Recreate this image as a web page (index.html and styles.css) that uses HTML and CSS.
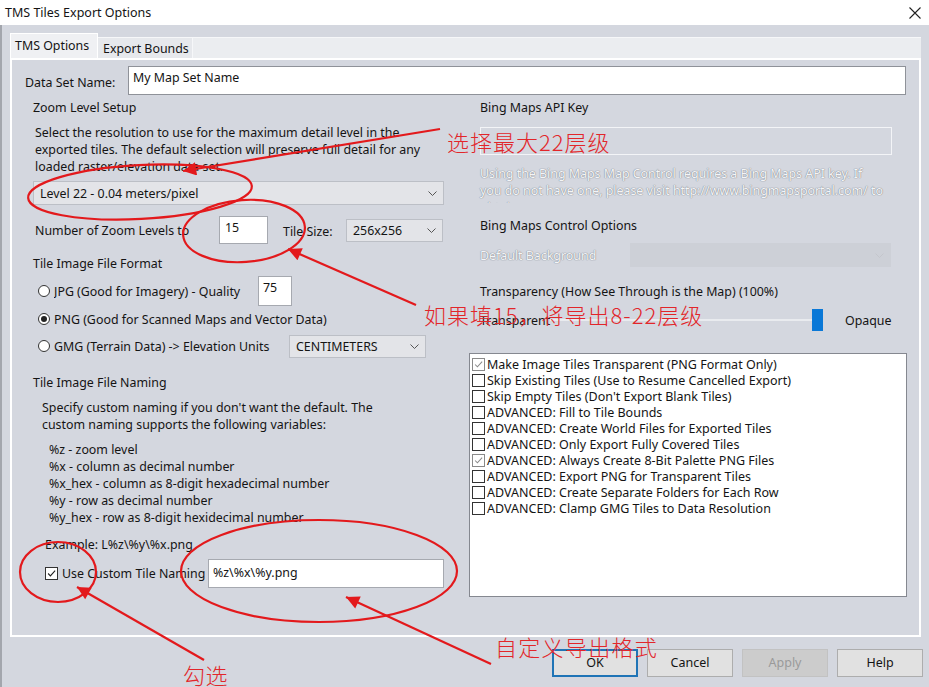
FILE: index.html
```html
<!DOCTYPE html>
<html>
<head>
<meta charset="utf-8">
<title>TMS Tiles Export Options</title>
<link rel="stylesheet" href="styles.css">
</head>
<body>
<div class="titlebar">
  <span class="title">TMS Tiles Export Options</span>
  <svg class="close" viewBox="0 0 12 12"><path d="M0.5 0.5 L11.5 11.5 M11.5 0.5 L0.5 11.5" stroke="#222" stroke-width="1.1" fill="none"/></svg>
</div>
<div class="frame">
  <div class="tabs">
    <div class="tab active">TMS Options</div>
    <div class="tab second">Export Bounds</div>
    <div class="tab-fill"></div>
  </div>
  <div class="panel">
    <div class="name-row">
      <span class="name-label">Data Set Name:</span>
      <div class="input name-input">My Map Set Name</div>
    </div>
    <div class="columns">
      <div class="col-left">
        <div class="legend">Zoom Level Setup</div>
        <div class="para">Select the resolution to use for the maximum detail level in the<br>exported tiles. The default selection will preserve full detail for any<br>loaded raster/elevation data set.</div>
        <div class="select sel-level"><span>Level 22 - 0.04 meters/pixel</span><svg class="chev" viewBox="0 0 9 5"><path d="M0.5 0.5 L4.5 4.5 L8.5 0.5" fill="none" stroke="#555"/></svg></div>
        <div class="zoom-row">
          <span class="zoom-label">Number of Zoom Levels to</span>
          <div class="input zoom-input">15</div>
          <span class="tile-label">Tile Size:</span>
          <div class="select sel-tile"><span>256x256</span><svg class="chev" viewBox="0 0 9 5"><path d="M0.5 0.5 L4.5 4.5 L8.5 0.5" fill="none" stroke="#555"/></svg></div>
        </div>
        <div class="legend lg-fmt">Tile Image File Format</div>
        <div class="radio-row row-jpg">
          <span class="radio"></span><span class="radio-label jpg">JPG (Good for Imagery) - Quality</span>
          <div class="input q-input">75</div>
        </div>
        <div class="radio-row row-png">
          <span class="radio"><span class="dot"></span></span><span class="radio-label">PNG (Good for Scanned Maps and Vector Data)</span>
        </div>
        <div class="radio-row row-gmg">
          <span class="radio"></span><span class="radio-label gmg">GMG (Terrain Data) -&gt; Elevation Units</span>
          <div class="select sel-unit"><span>CENTIMETERS</span><svg class="chev" viewBox="0 0 9 5"><path d="M0.5 0.5 L4.5 4.5 L8.5 0.5" fill="none" stroke="#555"/></svg></div>
        </div>
        <div class="legend lg-naming">Tile Image File Naming</div>
        <div class="spec">Specify custom naming if you don't want the default. The<br>custom naming supports the following variables:</div>
        <div class="vars">%z - zoom level<br>%x - column as decimal number<br>%x_hex - column as 8-digit hexadecimal number<br>%y - row as decimal number<br>%y_hex - row as 8-digit hexidecimal number</div>
        <div class="example">Example: L%z\%y\%x.png</div>
        <div class="custom-row">
          <span class="check"><svg viewBox="0 0 13 13"><path d="M2.5 6.5 L5.2 9.3 L10.8 3" fill="none" stroke="#222" stroke-width="1.3"/></svg></span>
          <span class="custom-label">Use Custom Tile Naming</span>
          <div class="input custom-input">%z\%x\%y.png</div>
        </div>
      </div>
      <div class="col-right">
        <div class="legend lg-right">Bing Maps API Key</div>
        <div class="api-input"></div>
        <div class="api-note">Using the Bing Maps Map Control requires a Bing Maps API key. If<br>you do not have one, please visit http://www.bingmapsportal.com/ to<br>obtain one.</div>
        <div class="legend lg-right lg-ctrl">Bing Maps Control Options</div>
        <div class="bg-row">
          <span class="bg-label">Default Background</span>
          <div class="select sel-bg"><span></span><svg class="chev" viewBox="0 0 9 5"><path d="M0.5 0.5 L4.5 4.5 L8.5 0.5" fill="none" stroke="#c4c6cc"/></svg></div>
        </div>
        <div class="legend lg-right lg-trans">Transparency (How See Through is the Map) (100%)</div>
        <div class="slider-row">
          <span class="s-label">Transparent</span>
          <div class="track"><span class="thumb"></span></div>
          <span class="s-right">Opaque</span>
        </div>
        <div class="checklist">
          <div class="item"><span class="check gray"><svg viewBox="0 0 13 13"><path d="M2.5 6.5 L5.2 9.3 L10.8 3" fill="none" stroke="#8a8a8a" stroke-width="1.2"/></svg></span>Make Image Tiles Transparent (PNG Format Only)</div>
          <div class="item"><span class="check"></span>Skip Existing Tiles (Use to Resume Cancelled Export)</div>
          <div class="item"><span class="check"></span>Skip Empty Tiles (Don't Export Blank Tiles)</div>
          <div class="item"><span class="check"></span>ADVANCED: Fill to Tile Bounds</div>
          <div class="item"><span class="check"></span>ADVANCED: Create World Files for Exported Tiles</div>
          <div class="item"><span class="check"></span>ADVANCED: Only Export Fully Covered Tiles</div>
          <div class="item"><span class="check gray"><svg viewBox="0 0 13 13"><path d="M2.5 6.5 L5.2 9.3 L10.8 3" fill="none" stroke="#8a8a8a" stroke-width="1.2"/></svg></span>ADVANCED: Always Create 8-Bit Palette PNG Files</div>
          <div class="item"><span class="check"></span>ADVANCED: Export PNG for Transparent Tiles</div>
          <div class="item"><span class="check"></span>ADVANCED: Create Separate Folders for Each Row</div>
          <div class="item"><span class="check"></span>ADVANCED: Clamp GMG Tiles to Data Resolution</div>
        </div>
      </div>
    </div>
  </div>
  <div class="buttons">
    <div class="btn ok">OK</div>
    <div class="btn">Cancel</div>
    <div class="btn disabled">Apply</div>
    <div class="btn">Help</div>
  </div>
</div>

<svg class="marks" viewBox="0 0 929 687">
  <defs>
    <marker id="ah" viewBox="0 0 10 10" refX="10" refY="5" markerWidth="7" markerHeight="6" orient="auto">
      <path d="M0 0 L10 5 L0 10 z" fill="#e3191c"/>
    </marker>
  </defs>
  <g fill="none" stroke="#e3191c" stroke-width="2.2">
    <ellipse cx="140" cy="192" rx="112" ry="27" transform="rotate(-3 140 192)"/>
    <ellipse cx="244" cy="231" rx="61" ry="31" transform="rotate(-4 244 231)"/>
    <ellipse cx="58" cy="572" rx="38" ry="30"/>
    <ellipse cx="319" cy="571" rx="138" ry="51"/>
    <line x1="440" y1="129" x2="183" y2="171" marker-end="url(#ah)"/>
    <line x1="416" y1="305" x2="288" y2="249" marker-end="url(#ah)"/>
    <line x1="204" y1="660" x2="77" y2="587" marker-end="url(#ah)"/>
    <line x1="491" y1="664" x2="346" y2="597" marker-end="url(#ah)"/>
  </g>
</svg>
<div class="note n1">选择最大22层级</div>
<div class="note n2">如果填15，将导出8-22层级</div>
<div class="note n3">自定义导出格式</div>
<div class="note n4">勾选</div>
</body>
</html>
```
FILE: styles.css
```css
* { box-sizing: border-box; }
html, body { margin: 0; padding: 0; }
body {
  width: 929px;
  height: 687px;
  overflow: hidden;
  position: relative;
  background: #d4d7df;
  font-family: "Noto Sans", "DejaVu Sans", sans-serif;
  font-size: 12.4px;
  color: #141414;
}
.titlebar {
  height: 25px;
  background: #fff;
  display: flex;
  align-items: center;
  justify-content: space-between;
  padding: 0 8px 0 5px;
}
.title { font-size: 12.5px; }
.close { width: 12px; height: 12px; }
.frame {
  border-left: 2px solid #a3a6ad;
  height: 662px;
  padding: 8px 0 0 8px;
}
.tabs { display: flex; align-items: flex-end; height: 25px; width: 911px; }
.tab {
  height: 21px;
  line-height: 21px;
  padding-left: 5px;
  background: #e6e8ec;
  border-top: 1px solid #f6f7f9;
  border-right: 1px solid #f6f7f9;
  white-space: nowrap;
}
.tab.active {
  width: 88px;
  height: 25px;
  line-height: 24px;
  background: #eff0f3;
  border: 1px solid #fff;
  border-bottom: none;
  padding-left: 4px;
}
.tab.second { width: 95px; }
.tab-fill { flex: 1; height: 21px; background: #ebedf0; border-top: 1px solid #f6f7f9; }
.panel {
  width: 911px;
  height: 579px;
  border: 2px solid #fff;
  padding-top: 6px;
}
.name-row { display: flex; align-items: center; height: 29px; }
.name-label { width: 116px; padding-left: 13px; padding-top: 3px; }
.input {
  background: #fff;
  border: 1px solid #a6a9b0;
  padding-left: 4px;
}
.name-input { width: 778px; height: 29px; line-height: 22px; border-color: #8f9299; }
.columns {
  display: grid;
  grid-template-columns: 430px 438px;
  column-gap: 13px;
  margin: 3px 0 0 14px;
}
.col-left, .col-right { display: flex; flex-direction: column; }
.legend { height: 20px; line-height: 20px; padding-left: 7px; white-space: nowrap; }
.para { margin-top: 5.5px; line-height: 17px; padding-left: 9px; white-space: nowrap; }
.select {
  display: flex;
  align-items: center;
  justify-content: space-between;
  background: #e3e4e8;
  border: 1px solid #bcbfc6;
  padding: 0 6px 0 6px;
}
.chev { width: 9px; height: 5px; }
.sel-level { margin: 6.5px 0 0 7px; width: 411px; height: 24px; }
.zoom-row { margin-top: 11px; height: 28px; display: flex; align-items: center; padding-left: 9px; }
.zoom-label { width: 184px; white-space: nowrap; }
.zoom-input { width: 49px; height: 28px; line-height: 22px; padding-left: 5px; }
.tile-label { width: 63px; margin-left: 15px; padding-top: 2px; }
.sel-tile { width: 97px; height: 23px; }
.lg-fmt { margin-top: 10px; }
.radio-row { display: flex; align-items: center; padding-left: 12px; }
.row-jpg { height: 28px; margin-top: 3px; }
.row-png { height: 28px; }
.row-gmg { height: 26px; }
.radio {
  width: 12px;
  height: 12px;
  border: 1px solid #333;
  border-radius: 50%;
  background: #fff;
  display: flex;
  align-items: center;
  justify-content: center;
  flex: none;
}
.dot { width: 6px; height: 6px; border-radius: 50%; background: #222; }
.radio-label { margin-left: 4px; white-space: nowrap; overflow: hidden; }
.jpg { width: 204px; }
.gmg { width: 217px; }
.q-input { width: 34px; height: 30px; line-height: 22px; }
.sel-unit { width: 137px; height: 23px; margin-left: 18px; }
.lg-naming { margin-top: 14px; }
.spec { margin-top: 5.5px; line-height: 17px; padding-left: 16px; white-space: nowrap; }
.vars { margin-top: 8px; line-height: 17px; padding-left: 23px; white-space: nowrap; }
.example { margin-top: 10px; line-height: 17px; padding-left: 19px; }
.custom-row { margin-top: 6.5px; height: 29px; display: flex; align-items: center; padding-left: 19px; }
.check {
  width: 13px;
  height: 13px;
  border: 1px solid #333;
  background: #fff;
  flex: none;
  display: block;
}
.check svg { display: block; width: 11px; height: 11px; }
.check.gray { border-color: #8a8a8a; }
.custom-label { width: 146px; margin-left: 4px; white-space: nowrap; }
.custom-input { width: 236px; height: 29px; line-height: 26px; }
.lg-right { padding-left: 11px; }
.api-input { margin: 9px 0 0 11px; width: 412px; height: 28px; border: 1px solid #f3f4f7; }
.api-note {
  margin-top: 9.5px;
  padding-left: 11px;
  line-height: 17px;
  height: 38px;
  margin-bottom: 3px;
  overflow: hidden;
  white-space: nowrap;
  color: #f4f5f7;
  text-shadow: 0 0 1px #7f838c, 0 0 1px #7f838c;
}
.lg-ctrl { margin-top: 10.5px; }
.bg-row { margin-top: 7px; height: 24px; display: flex; align-items: center; padding-left: 11px; }
.bg-label { width: 150px; color: #f4f5f7; text-shadow: 0 0 1px #7f838c, 0 0 1px #7f838c; white-space: nowrap; }
.sel-bg { width: 261px; height: 24px; background: #cdd0d7; border-color: #cdd0d7; }
.lg-trans { margin-top: 15px; }
.slider-row { margin-top: 6px; height: 24px; display: flex; align-items: center; padding-left: 11px; }
.s-label { width: 70px; white-space: nowrap; }
.track {
  width: 273px;
  height: 24px;
  display: flex;
  align-items: center;
  justify-content: flex-end;
  background: linear-gradient(#e9ebef, #e9ebef) center / 100% 2px no-repeat;
}
.thumb { width: 11px; height: 22px; background: #0a78d7; display: block; }
.s-right { margin-left: 22px; }
.checklist {
  margin-top: 21px;
  width: 438px;
  height: 244px;
  background: #fff;
  border: 1px solid #858890;
  padding: 2px 0 0 2px;
  font-size: 12.5px;
}
.item { height: 16px; display: flex; align-items: center; white-space: nowrap; }
.item .check { margin-right: 2px; }
.buttons {
  display: flex;
  justify-content: flex-end;
  gap: 9px;
  width: 913px;
  margin-top: 12px;
}
.btn {
  width: 86px;
  height: 28px;
  line-height: 26px;
  text-align: center;
  background: #e1e1e1;
  border: 1px solid #adadad;
  font-size: 12.5px;
}
.btn.ok { border: 2px solid #1f74b6; line-height: 24px; }
.btn.disabled { background: #cccccc; border-color: #c2c2c2; color: #9a9a9a; }
.marks { position: absolute; left: 0; top: 0; width: 929px; height: 687px; pointer-events: none; }
.note {
  position: absolute;
  font-family: "Noto Sans CJK SC", "Noto Sans CJK JP", sans-serif;
  font-size: 22px;
  font-weight: 300;
  line-height: 22px;
  color: #e2262a;
  white-space: nowrap;
}
.n1 { left: 447px; top: 130px; letter-spacing: 1px; }
.n2 { left: 424px; top: 303px; letter-spacing: 1px; }
.n3 { left: 495px; top: 635px; letter-spacing: 1.3px; }
.n4 { left: 183px; top: 663px; letter-spacing: 0.5px; }
```
